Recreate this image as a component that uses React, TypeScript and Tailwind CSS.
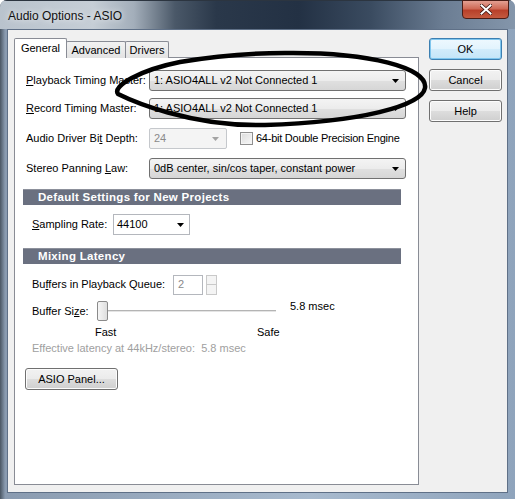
import React from "react";

const Arrow = ({ color = "#000" }: { color?: string }) => (
  <svg width="7" height="4" viewBox="0 0 7 4" className="shrink-0">
    <path d="M0 0H7L3.5 4Z" fill={color} />
  </svg>
);

const U = ({ c }: { c: string }) => <span className="underline underline-offset-[1px]">{c}</span>;

function Combo({ text, w }: { text: string; w: string }) {
  return (
    <div
      className={`${w} h-full flex items-center justify-between rounded-[3px] border border-[#707070] bg-[linear-gradient(to_bottom,#f4f4f4_0%,#ececec_50%,#e0e0e0_51%,#d6d6d6_100%)] pl-[4px] pr-[6px]`}
    >
      <span className="whitespace-nowrap">{text}</span>
      <Arrow />
    </div>
  );
}

function Btn({ label, primary, w = "w-[73px]" }: { label: string; primary?: boolean; w?: string }) {
  return (
    <div
      className={`${w} h-[22px] flex items-center justify-center rounded-[3px] border ${
        primary
          ? "border-[#3c7fb1] bg-[linear-gradient(to_bottom,#eef8fe_0%,#e2f3fd_50%,#d2ecfb_51%,#c4e5f8_100%)] shadow-[inset_0_0_0_1px_#7fc6ee]"
          : "border-[#707070] bg-[linear-gradient(to_bottom,#f2f2f2_0%,#ebebeb_50%,#dddddd_51%,#cfcfcf_100%)] shadow-[inset_0_0_0_1px_#fcfcfc]"
      }`}
    >
      {label}
    </div>
  );
}

export default function App() {
  return (
    <div className="relative w-[515px] h-[499px] bg-white overflow-hidden font-['Liberation_Sans',Arial,sans-serif] text-[11px] text-black leading-none">
      <div className="w-full h-full flex flex-col rounded-t-[7px] overflow-hidden bg-[linear-gradient(to_right,#4a5663_0%,#8a9bb0_1%,#a8bace_60%,#8fa4bc_100%)]">
        {/* Title bar */}
        <div className="h-[29px] flex items-start justify-between bg-[linear-gradient(to_right,#b9c3cd_0%,#c6ced6_18%,#a3aeba_26%,#4a5868_34%,#2a384a_42%,#233144_58%,#3a4b60_72%,#6b7d93_86%,#8496ab_100%)] border-t border-[#2c3540]">
          <div className="pl-[8px] pt-[9px] text-[12px] text-[#111] [text-shadow:0_0_6px_#ffffff]">Audio Options - ASIO</div>
          <div className="mr-[6px] w-[47px] h-[19px] -mt-px rounded-b-[4px] border border-[#4a1d16] bg-[linear-gradient(to_bottom,#e3a092_0%,#cf6a56_45%,#b8402a_55%,#c45a3f_100%)] flex items-center justify-center">
            <svg width="12" height="11" viewBox="0 0 12 11">
              <path d="M1.5 1.5L10.5 9.5M10.5 1.5L1.5 9.5" stroke="#3a1510" strokeWidth="3.6" strokeLinecap="square" />
              <path d="M1.5 1.5L10.5 9.5M10.5 1.5L1.5 9.5" stroke="#ffffff" strokeWidth="2" strokeLinecap="square" />
            </svg>
          </div>
        </div>

        {/* Body */}
        <div className="flex-1 flex pl-[7px] pr-[7px] pb-[6px]">
          <div className="flex-1 flex border border-[#5f7087] bg-[#f0f0f0] pl-[6px] pt-[8px] pb-[7px]">
            {/* Tabs + panel */}
            <div className="w-[405px] flex flex-col">
              <div className="relative z-10 h-[20px] flex items-start">
                <div className="w-[53px] h-[20px] bg-white border border-b-0 border-[#898c95] rounded-t-[2px] flex items-center justify-center pb-[1px]">
                  General
                </div>
                <div className="mt-[3px] w-[60px] h-[17px] -ml-px border border-b-0 border-[#898c95] rounded-t-[2px] bg-[linear-gradient(to_bottom,#f2f2f2,#e3e3e3)] flex items-center justify-center pt-[1px]">
                  Advanced
                </div>
                <div className="mt-[3px] w-[44px] h-[17px] -ml-px border border-b-0 border-[#898c95] rounded-t-[2px] bg-[linear-gradient(to_bottom,#f2f2f2,#e3e3e3)] flex items-center justify-center pt-[1px]">
                  Drivers
                </div>
              </div>
              <div className="-mt-px flex-1 border border-[#898c95] bg-white flex flex-col pl-[8px]">
                {/* Row 1 */}
                <div className="mt-[12px] h-[21px] flex items-center pl-[3px]">
                  <div className="w-[123px]">
                    <U c="P" />layback Timing Master:
                  </div>
                  <Combo text="1: ASIO4ALL v2 Not Connected 1" w="w-[257px]" />
                </div>
                {/* Row 2 */}
                <div className="mt-[7px] h-[21px] flex items-center pl-[3px]">
                  <div className="w-[123px]">
                    <U c="R" />ecord Timing Master:
                  </div>
                  <Combo text="1: ASIO4ALL v2 Not Connected 1" w="w-[257px]" />
                </div>
                {/* Row 3 */}
                <div className="mt-[9px] h-[21px] flex items-center pl-[3px]">
                  <div className="w-[123px]">
                    Audio Driver Bi<U c="t" /> Depth:
                  </div>
                  <div className="w-[78px] h-full flex items-center justify-between rounded-[2px] border border-[#c5c8cc] bg-[#f4f4f4] pl-[4px] pr-[7px] text-[#8a8a8a]">
                    <span>24</span>
                    <Arrow color="#a3a3a3" />
                  </div>
                  <div className="ml-[13px] w-[13px] h-[13px] border border-[#8f8f8f] bg-[linear-gradient(135deg,#dcdcdc,#f8f8f8)] shadow-[inset_0_0_0_1px_#f4f4f4]" />
                  <div className="ml-[3px] whitespace-nowrap tracking-[-0.25px]">64-bit Double Precision Engine</div>
                </div>
                {/* Row 4 */}
                <div className="mt-[9px] h-[21px] flex items-center pl-[3px]">
                  <div className="w-[123px]">
                    Stereo Panning <U c="L" />aw:
                  </div>
                  <Combo text="0dB center, sin/cos taper, constant power" w="w-[257px]" />
                </div>
                {/* Section 1 */}
                <div className="mt-[10px] w-[378px] h-[16px] bg-[#6a7080] border-t border-[#8c909b] flex items-center pl-[15px] text-white font-bold text-[11.5px] tracking-[0.3px]">
                  Default Settings for New Projects
                </div>
                <div className="mt-[9px] h-[21px] flex items-center pl-[9px]">
                  <div className="w-[81px]">
                    <U c="S" />ampling Rate:
                  </div>
                  <div className="w-[77px] h-full flex items-center justify-between border border-[#b4b7bd] bg-white pl-[3px] pr-[5px]">
                    <span>44100</span>
                    <Arrow />
                  </div>
                </div>
                {/* Section 2 */}
                <div className="mt-[13px] w-[378px] h-[16px] bg-[#6a7080] border-t border-[#8c909b] flex items-center pl-[15px] text-white font-bold text-[11.5px] tracking-[0.3px]">
                  Mixing Latency
                </div>
                <div className="mt-[10px] h-[21px] flex items-center pl-[9px]">
                  <div className="w-[141px]">
                    Bu<U c="f" />fers in Playback Queue:
                  </div>
                  <div className="w-[30px] h-[20px] border border-[#b4b7bd] bg-white flex items-center pl-[4px] text-[#8a8a8a]">2</div>
                  <div className="ml-[3px] w-[11px] h-[20px] flex flex-col">
                    <div className="flex-1 border border-[#c9c9c9] bg-[#f4f4f4]" />
                    <div className="flex-1 -mt-px border border-[#c9c9c9] bg-[#f4f4f4]" />
                  </div>
                </div>
                <div className="mt-[6px] h-[20px] flex items-center pl-[9px]">
                  <div className="w-[65px]">
                    Buffer Si<U c="z" />e:
                  </div>
                  <div className="w-[11px] h-[20px] rounded-[2px] border border-[#8a8a8a] bg-[linear-gradient(to_right,#f6f6f6,#dedede)]" />
                  <div className="w-[168px] h-[3px] border-t border-[#b4b4b4] border-b border-b-white bg-[#e4e4e4]" />
                  <div className="ml-[14px] -mt-[10px] whitespace-nowrap">5.8 msec</div>
                </div>
                <div className="mt-[4px] h-[14px] flex items-center pl-[72px]">
                  <span className="w-[162px]">Fast</span>
                  <span>Safe</span>
                </div>
                <div className="mt-[2px] h-[14px] flex items-center pl-[9px] text-[#a0a0a0]">
                  Effective latency at 44kHz/stereo:&nbsp; 5.8 msec
                </div>
                <div className="mt-[13px] pl-[2px]">
                  <Btn label="ASIO Panel..." w="w-[93px]" />
                </div>
              </div>
            </div>
            {/* Buttons */}
            <div className="ml-[10px] flex flex-col gap-[9px]">
              <Btn label="OK" primary />
              <Btn label="Cancel" />
              <Btn label="Help" />
            </div>
          </div>
        </div>
      </div>

      {/* Hand-drawn ellipse annotation */}
      <svg className="absolute left-0 top-0 pointer-events-none" width="515" height="499" viewBox="0 0 515 499">
        <path
          d="M285 53 C 370 52, 428 68, 425 88 C 422 106, 360 122, 265 125 C 190 127, 130 100, 118 94 C 112 86, 140 70, 180 62 C 215 56, 250 53, 285 53 Z"
          fill="none"
          stroke="#000"
          strokeWidth="4.5"
          strokeLinejoin="round"
        />
      </svg>
    </div>
  );
}
